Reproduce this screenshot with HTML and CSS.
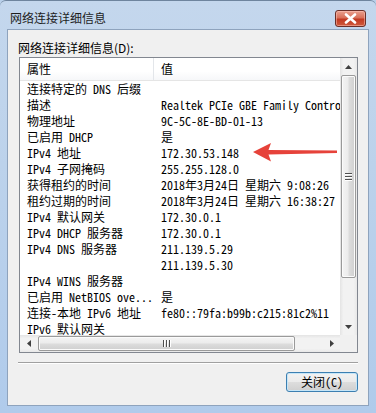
FILE: index.html
```html
<!DOCTYPE html>
<html lang="zh-CN">
<head>
<meta charset="utf-8">
<title>网络连接详细信息</title>
<link rel="stylesheet" href="styles.css">
</head>
<body>
<div class="window">
  <div class="titlebar">
    <span class="title">网络连接详细信息</span>
    <div class="close">
      <svg width="13" height="11" viewBox="0 0 13 11"><path d="M2 1.5 L11 9.5 M11 1.5 L2 9.5" stroke="#fff" stroke-width="2.6" stroke-linecap="round"/></svg>
    </div>
  </div>
  <div class="client">
    <div class="label">网络连接详细信息(D):</div>
    <div class="listbox">
      <div class="list">
        <div class="header">
          <div class="hcell c1">属性</div>
          <div class="hcell c2">值</div>
        </div>
        <div class="rows">
          <div class="row"><span class="c1">连接特定的 DNS 后缀</span><span class="c2"></span></div>
          <div class="row"><span class="c1">描述</span><span class="c2">Realtek PCIe GBE Family Contro</span></div>
          <div class="row"><span class="c1">物理地址</span><span class="c2">9C-5C-8E-BD-01-13</span></div>
          <div class="row"><span class="c1">已启用 DHCP</span><span class="c2">是</span></div>
          <div class="row"><span class="c1">IPv4 地址</span><span class="c2">172.30.53.148</span></div>
          <div class="row"><span class="c1">IPv4 子网掩码</span><span class="c2">255.255.128.0</span></div>
          <div class="row"><span class="c1">获得租约的时间</span><span class="c2">2018年3月24日 星期六 9:08:26</span></div>
          <div class="row"><span class="c1">租约过期的时间</span><span class="c2">2018年3月24日 星期六 16:38:27</span></div>
          <div class="row"><span class="c1">IPv4 默认网关</span><span class="c2">172.30.0.1</span></div>
          <div class="row"><span class="c1">IPv4 DHCP 服务器</span><span class="c2">172.30.0.1</span></div>
          <div class="row"><span class="c1">IPv4 DNS 服务器</span><span class="c2">211.139.5.29</span></div>
          <div class="row"><span class="c1"></span><span class="c2">211.139.5.30</span></div>
          <div class="row"><span class="c1">IPv4 WINS 服务器</span><span class="c2"></span></div>
          <div class="row"><span class="c1">已启用 NetBIOS ove...</span><span class="c2">是</span></div>
          <div class="row"><span class="c1">连接-本地 IPv6 地址</span><span class="c2">fe80::79fa:b99b:c215:81c2%11</span></div>
          <div class="row"><span class="c1">IPv6 默认网关</span><span class="c2"></span></div>
        </div>
      </div>
      <div class="vscroll">
        <div class="sbtn"><svg width="7" height="4" viewBox="0 0 7 4"><path d="M0 4 L3.5 0 L7 4Z" fill="#404040"/></svg></div>
        <div class="vthumb"><div class="vgrip"><i></i><i></i><i></i></div></div>
        <div class="spacer"></div>
        <div class="sbtn"><svg width="7" height="4" viewBox="0 0 7 4"><path d="M0 0 L3.5 4 L7 0Z" fill="#404040"/></svg></div>
      </div>
      <div class="hscroll">
        <div class="sbtn"><svg width="4" height="7" viewBox="0 0 4 7"><path d="M4 0 L0 3.5 L4 7Z" fill="#404040"/></svg></div>
        <div class="hthumb"><div class="hgrip"><i></i><i></i><i></i></div></div>
        <div class="spacer"></div>
        <div class="sbtn"><svg width="4" height="7" viewBox="0 0 4 7"><path d="M0 0 L4 3.5 L0 7Z" fill="#404040"/></svg></div>
      </div>
      <div class="corner"></div>
      <svg class="arrow" width="92" height="26" viewBox="0 0 92 26">
        <path d="M4 12 L22 3 L19.5 10 L88 10.5 L88 13 L19.5 14.5 L22 21.5 Z" fill="#e6423a"/>
      </svg>
    </div>
    <div class="sep"></div>
    <div class="buttons">
      <button class="btn">关闭(C)</button>
    </div>
  </div>
</div>
</body>
</html>
```

FILE: styles.css
```css
html, body {
  margin: 0;
  padding: 0;
  background: #b9d0ea;
}

.window {
  width: 376px;
  height: 413px;
  box-sizing: border-box;
  padding: 0 7px 7px 7px;
  background: linear-gradient(to bottom, #c4d7ed 0%, #bcd2eb 40%, #b0cbeb 100%);
  border-top: 1px solid #6f859e;
  border-radius: 6px 6px 0 0;
  display: flex;
  flex-direction: column;
  font-family: "Noto Sans Mono CJK SC", "Noto Sans CJK SC", monospace;
  font-size: 12px;
  color: #000;
}

.titlebar {
  height: 28px;
  flex: none;
  display: flex;
  align-items: center;
  justify-content: space-between;
  padding: 0 2px 0 3px;
}

.title {
  font-family: "Noto Sans CJK SC", sans-serif;
  font-size: 12px;
  color: #1e1e1e;
  padding-top: 5px;
}

.close {
  width: 31px;
  height: 17px;
  margin-top: 7px;
  margin-right: 1px;
  box-sizing: border-box;
  border: 1px solid #6a2f28;
  border-radius: 3px;
  background: linear-gradient(to bottom, #e9a08e 0%, #d9705a 45%, #c23a22 55%, #cf5a3c 100%);
  box-shadow: inset 0 0 0 1px rgba(255, 200, 190, 0.5);
  display: flex;
  align-items: center;
  justify-content: center;
}

.client {
  flex: 1;
  background: #f0f0f0;
  border: 1px solid #8ea3bd;
  padding-top: 9px;
  display: flex;
  flex-direction: column;
}

.label {
  font-family: "Noto Sans CJK SC", sans-serif;
  height: 18px;
  line-height: 18px;
  padding-left: 10px;
}

.listbox {
  position: relative;
  margin-left: 11px;
  width: 339px;
  height: 296px;
  box-sizing: border-box;
  border: 1px solid #828790;
  background: #fff;
  display: grid;
  grid-template-columns: 320px 17px;
  grid-template-rows: 277px 17px;
}

.list {
  overflow: hidden;
  white-space: nowrap;
}

.header {
  height: 22px;
  display: flex;
  border-bottom: 1px solid #e5e5e5;
  background: linear-gradient(to bottom, #ffffff 0%, #ffffff 60%, #f6f7f9 100%);
  font-family: "Noto Sans CJK SC", sans-serif;
}

.hcell {
  line-height: 22px;
  padding-left: 7px;
  box-sizing: border-box;
}

.hcell.c1 {
  width: 134px;
  border-right: 1px solid #e3e6ea;
}

.row {
  height: 16px;
  line-height: 16px;
  display: flex;
}

.row .c1 {
  width: 134px;
  flex: none;
  padding-left: 7px;
  box-sizing: border-box;
  overflow: hidden;
}

.row .c2 {
  padding-left: 7px;
  flex: none;
}

.vscroll {
  display: flex;
  flex-direction: column;
  background: linear-gradient(to right, #e4e4e4 0%, #f2f2f2 20%, #f2f2f2 80%, #e8e8e8 100%);
}

.hscroll {
  display: flex;
  background: linear-gradient(to bottom, #e4e4e4 0%, #f2f2f2 20%, #f2f2f2 80%, #e8e8e8 100%);
}

.sbtn {
  width: 17px;
  height: 17px;
  flex: none;
  display: flex;
  align-items: center;
  justify-content: center;
}

.spacer {
  flex: 1;
}

.vthumb {
  height: 203px;
  margin: 0 1px;
  box-sizing: border-box;
  border: 1px solid #9a9a9a;
  border-radius: 2px;
  background: linear-gradient(to right, #f4f4f4 0%, #ececec 45%, #dcdcdc 55%, #cfcfcf 100%);
  box-shadow: inset 0 0 0 1px #fbfbfb;
  display: flex;
  align-items: center;
  justify-content: center;
}

.hthumb {
  width: 257px;
  margin: 1px 0 1px 1px;
  box-sizing: border-box;
  border: 1px solid #9a9a9a;
  border-radius: 2px;
  background: linear-gradient(to bottom, #f4f4f4 0%, #ececec 45%, #dcdcdc 55%, #cfcfcf 100%);
  box-shadow: inset 0 0 0 1px #fbfbfb;
  display: flex;
  align-items: center;
  justify-content: center;
}

.vgrip {
  display: flex;
  flex-direction: column;
  gap: 1px;
}

.vgrip i {
  display: block;
  width: 7px;
  height: 1px;
  background: #505050;
  border-bottom: 1px solid #fff;
}

.hgrip {
  display: flex;
  gap: 1px;
}

.hgrip i {
  display: block;
  width: 1px;
  height: 7px;
  background: #505050;
  border-right: 1px solid #fff;
}

.corner {
  background: #f0f0f0;
}

.arrow {
  position: absolute;
  left: 229px;
  top: 82px;
}

.sep {
  margin: 9px 10px 0 10px;
  height: 1px;
  background: #a0a0a0;
  border-bottom: 1px solid #ffffff;
}

.buttons {
  display: flex;
  justify-content: flex-end;
  padding: 8px 10px 0 0;
}

.btn {
  width: 72px;
  height: 20px;
  padding: 0;
  border: 1px solid #3c7fb1;
  border-radius: 3px;
  background: linear-gradient(to bottom, #f2f2f2 0%, #ebebeb 48%, #dddddd 52%, #cfcfcf 100%);
  box-shadow: inset 0 0 0 1px #c6e6f8;
  font-family: "Noto Sans Mono CJK SC", "Noto Sans CJK SC", monospace;
  font-size: 12px;
  line-height: 18px;
  color: #000;
}
```
